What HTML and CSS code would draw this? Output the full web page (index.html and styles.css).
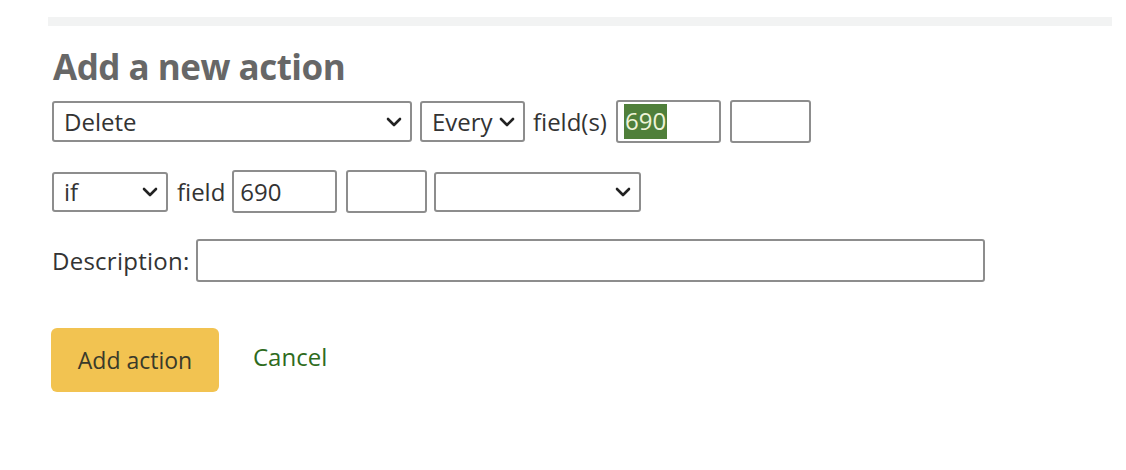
FILE: index.html
```html
<!DOCTYPE html>
<html lang="en">
<head>
<meta charset="utf-8">
<title>Add a new action</title>
<link rel="stylesheet" href="styles.css">
</head>
<body>
<div class="page">
  <div class="rule"></div>
  <form class="form">
    <h1 class="title">Add a new action</h1>
    <div class="row row-first">
      <div class="select w-action"><span>Delete</span><svg class="chev" viewBox="0 0 16 10" width="16" height="10"><polyline points="2,2 8,8 14,2"/></svg></div>
      <div class="select w-every"><span>Every</span><svg class="chev" viewBox="0 0 16 10" width="16" height="10"><polyline points="2,2 8,8 14,2"/></svg></div>
      <span class="label lbl-fields">field(s)</span>
      <div class="input w-field"><span class="sel">690</span></div>
      <div class="input w-sub sub-first"></div>
    </div>
    <div class="row row-second">
      <div class="select w-if"><span>if</span><svg class="chev" viewBox="0 0 16 10" width="16" height="10"><polyline points="2,2 8,8 14,2"/></svg></div>
      <span class="label lbl-field">field</span>
      <div class="input w-field"><span>690</span></div>
      <div class="input w-sub sub-second"></div>
      <div class="select w-cond"><span></span><svg class="chev" viewBox="0 0 16 10" width="16" height="10"><polyline points="2,2 8,8 14,2"/></svg></div>
    </div>
    <div class="row row-third">
      <span class="label lbl-desc">Description:</span>
      <div class="input w-desc"></div>
    </div>
    <div class="actions">
      <button type="button" class="btn">Add action</button>
      <a class="cancel" href="#">Cancel</a>
    </div>
  </form>
</div>
</body>
</html>
```
FILE: styles.css
```css
html, body {
  margin: 0;
  padding: 0;
  background: #ffffff;
}
body {
  font-family: "Open Sans", "Noto Sans", sans-serif;
  color: #333333;
  font-size: 24px;
}
.page {
  padding: 17px 14px 0 48px;
}
.rule {
  height: 9px;
  background: #f2f3f3;
}
.form {
  padding-left: 4px;
}
.title {
  margin: 21px 0 13px 1px;
  font-size: 35px;
  line-height: 40px;
  font-weight: 700;
  color: #676767;
  letter-spacing: -0.5px;
}
.row {
  display: flex;
  align-items: center;
  gap: 8px;
  height: 43px;
}
.row-second { margin-top: 27px; }
.row-third { margin-top: 26px; }
.select {
  box-sizing: border-box;
  height: 41px;
  border: 2px solid #8d8d8d;
  border-radius: 3px;
  display: flex;
  align-items: center;
  justify-content: space-between;
  padding: 0 8px 0 10px;
  color: #333333;
  line-height: 1;
}
.row-second .select { height: 40px; }
.chev {
  fill: none;
  stroke: #222222;
  stroke-width: 2.6;
  stroke-linecap: round;
  stroke-linejoin: round;
  flex: none;
}
.input {
  box-sizing: border-box;
  height: 43px;
  border: 2px solid #8d8d8d;
  border-radius: 3px;
  display: flex;
  align-items: center;
  padding: 0 6px;
  line-height: 1;
}
.sel {
  background: #4f7f3a;
  color: #eef3d8;
  padding: 5px 1px 6px;
}
.label {
  color: #333333;
  line-height: 1;
}
.w-action { width: 360px; }
.w-every { width: 105px; }
.w-field { width: 105px; }
.w-sub { width: 81px; }
.w-if { width: 116px; }
.w-cond { width: 207px; }
.w-desc { width: 789px; }
.lbl-fields { margin-right: 1px; }
.sub-first { margin-left: 1px; }
.lbl-field { margin-left: 1px; margin-right: -1px; }
.sub-second { margin-left: 1px; margin-right: -1px; }
.lbl-desc { margin-right: -1px; letter-spacing: 0.25px; }
.actions {
  display: flex;
  align-items: center;
  gap: 34px;
  margin-top: 46px;
}
.btn {
  font-family: inherit;
  font-size: 23px;
  color: #3a3a2a;
  background: #f2c351;
  border: none;
  border-radius: 6px;
  width: 168px;
  height: 64px;
  padding: 0;
  margin-left: -1px;
}
.cancel {
  color: #2e6b1c;
  text-decoration: none;
  font-size: 24px;
  margin-top: -7px;
}
```
